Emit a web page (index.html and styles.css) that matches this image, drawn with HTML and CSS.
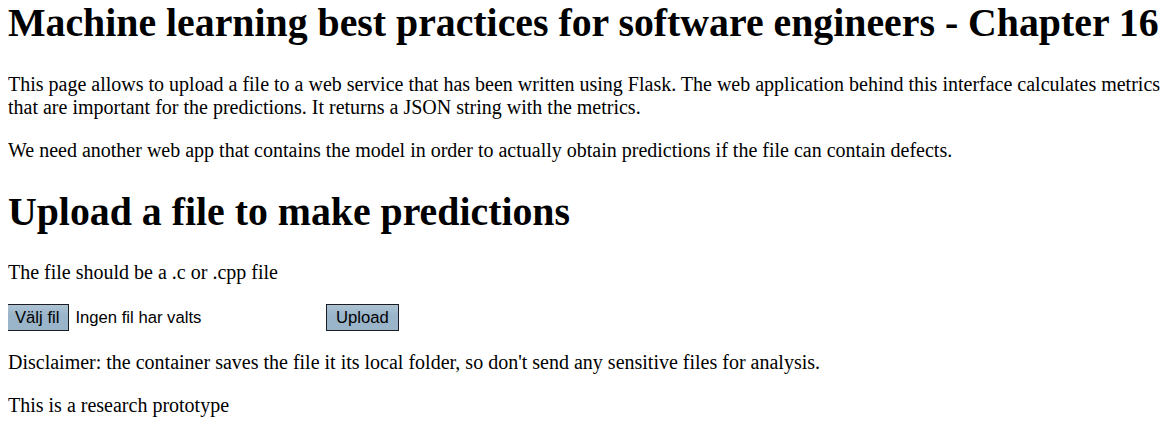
FILE: index.html
```html
<!DOCTYPE html>
<html lang="en">
<head>
<meta charset="utf-8">
<title>Machine learning best practices - Chapter 16</title>
<link rel="stylesheet" href="styles.css">
</head>
<body>
<h1 class="title title-first">Machine learning best practices for software engineers - Chapter 16</h1>
<p class="text">This page allows to upload a file to a web service that has been written using Flask. The web application behind this interface calculates metrics that are important for the predictions. It returns a JSON string with the metrics.</p>
<p class="text">We need another web app that contains the model in order to actually obtain predictions if the file can contain defects.</p>
<h1 class="title">Upload a file to make predictions</h1>
<p class="text">The file should be a .c or .cpp file</p>
<form class="upload-form">
  <label class="file-picker">
    <span class="btn">Välj fil</span>
    <span class="file-status">Ingen fil har valts</span>
  </label>
  <button type="button" class="btn">Upload</button>
</form>
<p class="text">Disclaimer: the container saves the file it its local folder, so don't send any sensitive files for analysis.</p>
<p class="text">This is a research prototype</p>
</body>
</html>
```
FILE: styles.css
```css
html, body {
  background: #ffffff;
}
body {
  margin: 0 0 0 8px;
  font-family: "Liberation Serif", "Times New Roman", serif;
  color: #000000;
}
.title {
  font-size: 39.8px;
  font-weight: bold;
  margin: 26.8px 0;
  white-space: nowrap;
}
.title-first {
  margin-top: 0;
}
.text {
  font-size: 20px;
  margin: 20px 0;
}
.upload-form {
  display: flex;
  align-items: center;
  margin: 0 0 0 -3px;
  font-family: "Liberation Sans", Arial, sans-serif;
  font-size: 16.67px;
}
.file-picker {
  display: flex;
  align-items: center;
  gap: 6px;
  width: 321px;
}
.btn {
  display: inline-flex;
  align-items: center;
  justify-content: center;
  box-sizing: border-box;
  height: 27px;
  padding: 0 9px;
  border: 1px solid #1c1c24;
  background: linear-gradient(#aec4d4, #9ab5c9 40%);
  color: #000000;
  font-family: "Liberation Sans", Arial, sans-serif;
  font-size: 16.67px;
}
.file-status {
  color: #000000;
}
```
